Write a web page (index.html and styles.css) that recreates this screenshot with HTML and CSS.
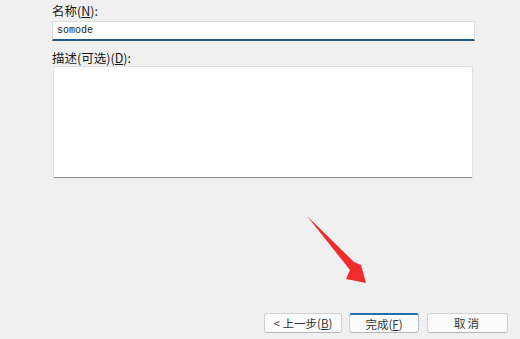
FILE: index.html
```html
<!DOCTYPE html>
<html lang="zh-CN">
<head>
    <meta charset="UTF-8">
    <title>名称</title>
    <link rel="stylesheet" href="styles.css">
</head>
<body>
    <div class="page">
        <div class="form">
            <label class="label">名称(<u>N</u>):</label>
            <div class="name-box">somode</div>
            <label class="label desc-label">描述(可选)(<u>D</u>):</label>
            <div class="desc-box"></div>
        </div>
        <div class="buttons">
            <button class="btn back">&lt; 上一步(<u>B</u>)</button>
            <button class="btn finish">完成(<u>F</u>)</button>
            <button class="btn cancel">取消</button>
        </div>
        <svg class="arrow" width="520" height="339" viewBox="0 0 520 339">
            <polygon points="307,216 354,262 361,265 366,283 346,279 350,270" fill="#f22b2b"/>
        </svg>
    </div>
</body>
</html>
```

FILE: styles.css
```css
* {
    margin: 0;
    padding: 0;
    box-sizing: border-box;
}
body {
    background: #f0f0f0;
    font-family: "Noto Sans CJK SC", "Liberation Sans", sans-serif;
    color: #1a1a1a;
}
.page {
    position: relative;
    width: 520px;
    height: 339px;
    display: flex;
    flex-direction: column;
}
.form {
    width: 423px;
    margin-left: 52px;
    padding-top: 2px;
    display: flex;
    flex-direction: column;
}
.label {
    font-size: 12.5px;
    line-height: 17px;
    height: 19px;
}
.label u {
    text-decoration: underline;
}
.name-box {
    height: 20px;
    background: #fff;
    border: 1px solid #dcdcdc;
    border-bottom: 2px solid #1d5b86;
    font-family: "Liberation Mono", monospace;
    font-size: 10px;
    line-height: 17px;
    padding-left: 4px;
}
.desc-label {
    margin-top: 8px;
    height: 17px;
}
.desc-box {
    height: 112px;
    margin-left: 1px;
    width: 420px;
    background: #fff;
    border: 1px solid #e0e0e0;
    border-bottom: 1px solid #8a8a8a;
    border-radius: 2px;
}
.buttons {
    margin-top: auto;
    margin-bottom: 6px;
    display: flex;
    justify-content: flex-end;
    gap: 7px;
    padding-right: 12px;
}
.btn {
    height: 20px;
    background: #fbfbfb;
    border: 1px solid #d0d0d0;
    border-bottom-color: #b8b8b8;
    border-radius: 3px;
    font-family: "Noto Sans CJK SC", "Liberation Sans", sans-serif;
    font-size: 11.5px;
    line-height: 16px;
    color: #333;
}
.back {
    width: 78px;
}
.finish {
    width: 70px;
    border-top: 2px solid #2a6ca8;
    border-right: 1px dotted #7a8fa3;
}
.cancel {
    width: 81px;
    margin-left: 1px;
    letter-spacing: 2px;
}
.arrow {
    position: absolute;
    left: 0;
    top: 0;
}
```
